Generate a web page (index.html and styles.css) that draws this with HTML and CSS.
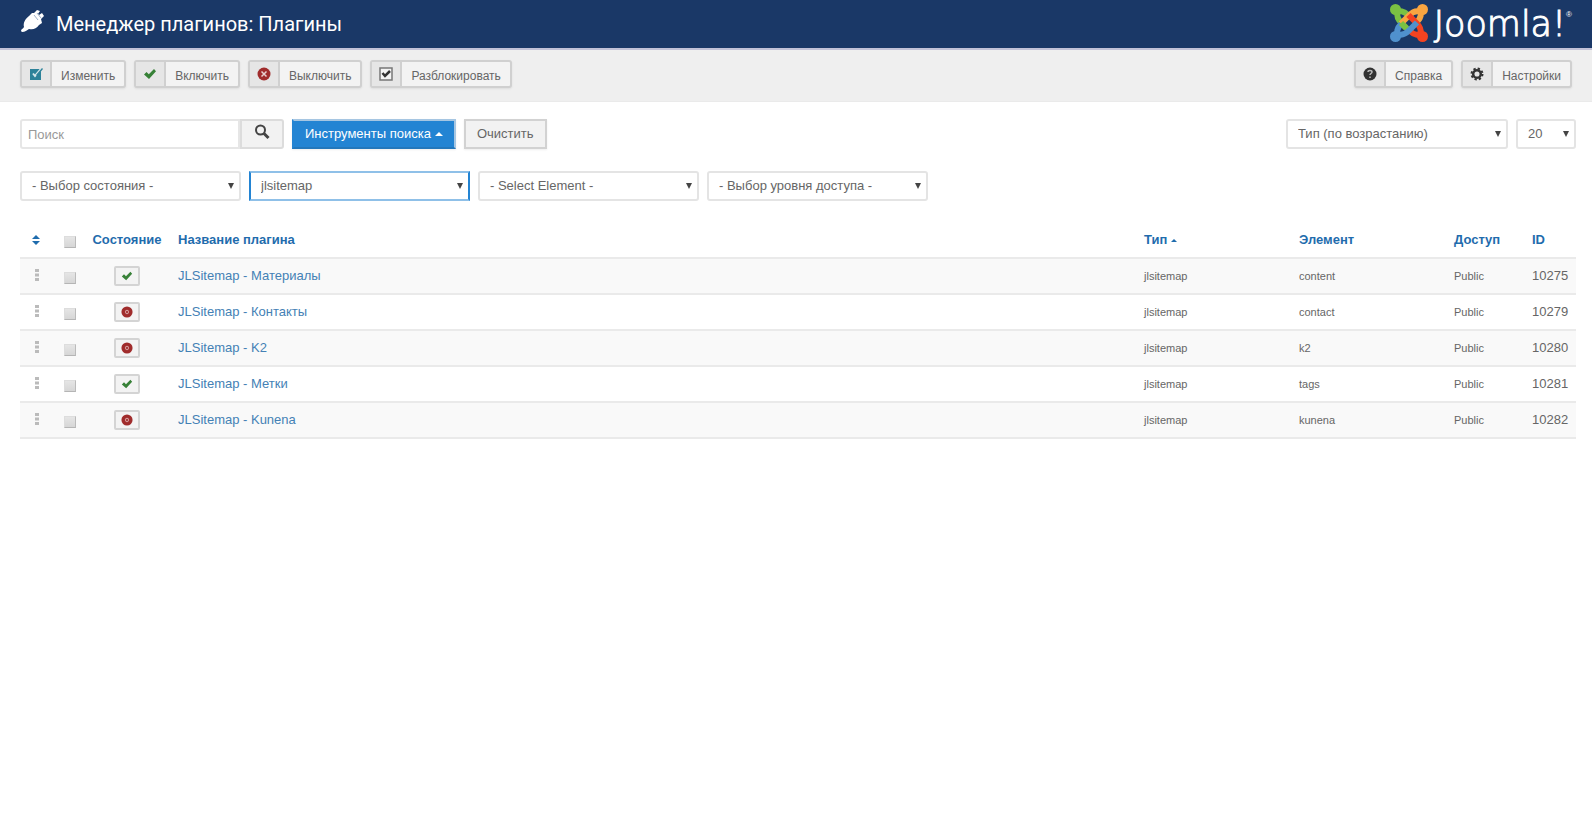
FILE: index.html
```html
<!DOCTYPE html>
<html lang="ru">
<head>
<meta charset="utf-8">
<title>Менеджер плагинов: Плагины</title>
<link rel="stylesheet" href="styles.css">
</head>
<body>
<svg class="sprite" aria-hidden="true">
  <symbol id="check" viewBox="0 0 14 14"><path d="M1 7.500 3.500 5l2.300 2.300L11 2l2 2.300L6 12z" fill="#378137"/></symbol>
  <symbol id="cancel" viewBox="0 0 14 14"><circle cx="7" cy="7" r="6.500" fill="#a02c2c"/><path d="m4.500 4.500 5 5m0-5-5 5" stroke="#e8d0d0" stroke-width="1.500"/></symbol>
  <symbol id="dot-cancel" viewBox="0 0 14 14"><circle cx="7" cy="7" r="4.500" fill="#d49a9a" stroke="#a02c2c" stroke-width="4"/><path d="m5.500 5.500 3 3m0-3-3 3" stroke="#a02c2c" stroke-width="1"/></symbol>
  <symbol id="arrow" viewBox="0 0 8 8"><path d="M1 1h6L4 7z" fill="#444"/></symbol>
  <symbol id="grip" viewBox="0 0 4 14"><path d="M0 0h4v3H0zM0 4.500h4v3H0zM0 9h4v3H0z" fill="#bbb"/></symbol>
  <symbol id="arm" viewBox="0 0 38 38"><circle cx="5.500" cy="5.500" r="5.500" fill="currentColor"/><path d="M18 11C14 7 9 6 7.500 9c-1 4 1 7 4 10l8 8" fill="none" stroke="currentColor" stroke-width="6"/></symbol>
</svg>
<header class="header">
  <svg class="plug" viewBox="0 0 24 24" aria-hidden="true"><path d="M1 22c0-2 2-2 3-4-1-4 1-8 5-11l3-3 2 0 3-3 3 1-2 3 1 1 3-2 2 3-3 3 1 4-3 2c-3 4-6 5-10 4-2 1-4 3-7 3z" fill="#fff"/><path d="m14 6 4 5m-1-7 4 5" stroke="#9fb0c8" stroke-width="1"/></svg>
  <h1 class="title">Менеджер плагинов: Плагины</h1>
  <a class="logo" href="#">
    <svg class="mark" viewBox="0 0 38 38" aria-hidden="true">
      <use href="#arm" width="38" height="38" color="#7ac143"/>
      <use href="#arm" width="38" height="38" color="#f9a541" transform="rotate(90 19 19)"/>
      <use href="#arm" width="38" height="38" color="#f44321" transform="rotate(180 19 19)"/>
      <use href="#arm" width="38" height="38" color="#5091cd" transform="rotate(270 19 19)"/>
      <path d="m11 19 5 5" stroke="#7ac143" stroke-width="6"/>
    </svg>
    <span class="wordmark">Joomla!</span><span class="reg">®</span>
  </a>
</header>
<nav class="toolbar" aria-label="Действия">
  <button class="tool"><span class="tool-icon"><svg class="icon" viewBox="0 0 14 14"><path d="M1 2h11v11H1z" fill="#2d8299"/><path d="M4 6.500 6 9l6-7" fill="none" stroke="#d5e6ea" stroke-width="2"/><path d="m7 8 6-7 1 1-6 7z" fill="#2d8299"/></svg></span><span class="tool-text">Изменить</span></button>
  <button class="tool"><span class="tool-icon"><svg class="icon"><use href="#check"/></svg></span><span class="tool-text">Включить</span></button>
  <button class="tool"><span class="tool-icon"><svg class="icon"><use href="#cancel"/></svg></span><span class="tool-text">Выключить</span></button>
  <button class="tool"><span class="tool-icon"><svg class="icon" viewBox="0 0 14 14"><path d="M1 1h12v12H1z" fill="#f4f4f4" stroke="#777" stroke-width="1.500"/><path d="m3.500 6 2.500 3 5-5" fill="none" stroke="#333" stroke-width="2.500"/></svg></span><span class="tool-text">Разблокировать</span></button>
  <span class="spacer"></span>
  <button class="tool"><span class="tool-icon"><svg class="icon" viewBox="0 0 14 14"><circle cx="7" cy="7" r="6.500" fill="#333"/><path d="M5 5c0-2 4-2 4 0 0 1.500-2 1.500-2 3m0 1.500V11" fill="none" stroke="#bbb" stroke-width="1.500"/></svg></span><span class="tool-text">Справка</span></button>
  <button class="tool"><span class="tool-icon"><svg class="icon" viewBox="0 0 14 14"><circle cx="7" cy="7" r="5.500" fill="none" stroke="#333" stroke-width="2" stroke-dasharray="2.300 2.020"/><circle cx="7" cy="7" r="3.800" fill="none" stroke="#333" stroke-width="2.500"/></svg></span><span class="tool-text">Настройки</span></button>
</nav>
<main class="main">
  <form class="row" onsubmit="return false">
    <div class="search"><input class="field" type="text" placeholder="Поиск" aria-label="Поиск"><button class="go" aria-label="Искать"><svg class="lens" viewBox="0 0 16 16"><circle cx="6.500" cy="6" r="4.500" fill="none" stroke="#444" stroke-width="2"/><path d="m9.500 9 5 5" stroke="#444" stroke-width="3"/></svg></button></div>
    <button class="btn primary">Инструменты поиска <svg class="caret" viewBox="0 0 8 4"><path d="M0 4 4 0l4 4z" fill="#fff"/></svg></button>
    <button class="btn">Очистить</button>
    <span class="spacer"></span>
    <span class="pick"><select class="select" aria-label="Сортировка"><option>Тип (по возрастанию)</option></select><svg class="arrow"><use href="#arrow"/></svg></span>
    <span class="pick short"><select class="select" aria-label="Количество"><option>20</option></select><svg class="arrow"><use href="#arrow"/></svg></span>
  </form>
  <div class="row filters">
    <span class="pick"><select class="select" aria-label="Состояние"><option>- Выбор состояния -</option></select><svg class="arrow"><use href="#arrow"/></svg></span>
    <span class="pick"><select class="select active" aria-label="Тип"><option>jlsitemap</option></select><svg class="arrow"><use href="#arrow"/></svg></span>
    <span class="pick"><select class="select" aria-label="Элемент"><option>- Select Element -</option></select><svg class="arrow"><use href="#arrow"/></svg></span>
    <span class="pick"><select class="select" aria-label="Доступ"><option>- Выбор уровня доступа -</option></select><svg class="arrow"><use href="#arrow"/></svg></span>
  </div>
  <table class="list">
    <thead>
      <tr>
        <th class="c-sort"><a href="#" aria-label="Порядок"><svg class="sort" viewBox="0 0 8 10"><path d="M0 4 4 0l4 4zM0 6h8l-4 4z" fill="#1f6cad"/></svg></a></th>
        <th class="c-check"><input class="tick" type="checkbox" aria-label="Выбрать все"></th>
        <th class="c-state"><a href="#">Состояние</a></th>
        <th><a href="#">Название плагина</a></th>
        <th class="c-type"><a href="#">Тип <svg class="caret small-caret" viewBox="0 0 8 4"><path d="M0 4 4 0l4 4z" fill="#1f6cad"/></svg></a></th>
        <th class="c-type"><a href="#">Элемент</a></th>
        <th class="c-access"><a href="#">Доступ</a></th>
        <th class="c-id"><a href="#">ID</a></th>
      </tr>
    </thead>
    <tbody>
      <tr><td class="c-sort"><svg class="grip"><use href="#grip"/></svg></td><td class="c-check"><input class="tick" type="checkbox" aria-label="Материалы"></td><td class="c-state"><button class="state" aria-label="Выключить"><svg class="mini"><use href="#check"/></svg></button></td><td><a href="#">JLSitemap - Материалы</a></td><td class="small">jlsitemap</td><td class="small">content</td><td class="small">Public</td><td>10275</td></tr>
      <tr><td class="c-sort"><svg class="grip"><use href="#grip"/></svg></td><td class="c-check"><input class="tick" type="checkbox" aria-label="Контакты"></td><td class="c-state"><button class="state" aria-label="Включить"><svg class="mini"><use href="#dot-cancel"/></svg></button></td><td><a href="#">JLSitemap - Контакты</a></td><td class="small">jlsitemap</td><td class="small">contact</td><td class="small">Public</td><td>10279</td></tr>
      <tr><td class="c-sort"><svg class="grip"><use href="#grip"/></svg></td><td class="c-check"><input class="tick" type="checkbox" aria-label="K2"></td><td class="c-state"><button class="state" aria-label="Включить"><svg class="mini"><use href="#dot-cancel"/></svg></button></td><td><a href="#">JLSitemap - K2</a></td><td class="small">jlsitemap</td><td class="small">k2</td><td class="small">Public</td><td>10280</td></tr>
      <tr><td class="c-sort"><svg class="grip"><use href="#grip"/></svg></td><td class="c-check"><input class="tick" type="checkbox" aria-label="Метки"></td><td class="c-state"><button class="state" aria-label="Выключить"><svg class="mini"><use href="#check"/></svg></button></td><td><a href="#">JLSitemap - Метки</a></td><td class="small">jlsitemap</td><td class="small">tags</td><td class="small">Public</td><td>10281</td></tr>
      <tr><td class="c-sort"><svg class="grip"><use href="#grip"/></svg></td><td class="c-check"><input class="tick" type="checkbox" aria-label="Kunena"></td><td class="c-state"><button class="state" aria-label="Включить"><svg class="mini"><use href="#dot-cancel"/></svg></button></td><td><a href="#">JLSitemap - Kunena</a></td><td class="small">jlsitemap</td><td class="small">kunena</td><td class="small">Public</td><td>10282</td></tr>
    </tbody>
  </table>
</main>
</body>
</html>
```
FILE: styles.css
```css
* { box-sizing: border-box; }
body { margin: 0; background: #fff; color: #666; font: 13px/18px "Liberation Sans", Arial, sans-serif; }
button, input, select { font: inherit; color: inherit; margin: 0; }
a { color: #4481b5; text-decoration: none; }
svg { display: block; flex: none; }
.sprite { position: absolute; width: 0; height: 0; }
.spacer { flex: 1; }

.header { display: flex; align-items: center; height: 50px; padding: 0 20px; background: #1a3867; border-bottom: 2px solid #c2c2d8; }
.plug { width: 24px; height: 24px; margin-bottom: 6px; }
.title { margin: 0 0 0 12px; color: #fff; font: 400 20px/24px Roboto, "Liberation Sans", sans-serif; }
.logo { display: flex; align-items: center; margin-left: auto; color: #fff; }
.mark { width: 38px; height: 38px; margin: 0 6px 2px 0; }
.wordmark { font: 200 35px/44px "DejaVu Sans", sans-serif; -webkit-text-stroke: 1px #fff; }
.reg { align-self: flex-start; font-size: 8px; line-height: 26px; }

.toolbar { display: flex; gap: 8px; padding: 10px 20px 13px; background: #efefef; border-bottom: 1px solid #eaeaea; }
.tool { display: flex; height: 28px; padding: 0; border: 2px solid #d0d0d0; border-radius: 3px; background: #f3f3f3; font-size: 12px; box-shadow: 0 1px 2px #ddd; }
.tool-icon { display: flex; align-items: center; justify-content: center; width: 30px; height: 24px; border-right: 2px solid #d0d0d0; background: #e6e6e6; }
.tool-text { padding: 0 9px; line-height: 28px; }
.icon { width: 14px; height: 14px; }

.main { padding: 17px 16px 0 20px; }
.row { display: flex; gap: 8px; }
.filters { gap: 8px; margin-top: 22px; }
.search { display: flex; width: 264px; }
.field { flex: 1; min-width: 0; height: 30px; padding: 0 6px; border: 2px solid #e6e6e6; border-radius: 3px 0 0 3px; background: #fff; }
.field::placeholder { color: #999; }
.go { display: flex; align-items: center; justify-content: center; width: 44px; padding: 0 0 4px; border: 2px solid #dcdcdc; border-radius: 0 3px 3px 0; background: #f2f2f2; }
.lens { width: 16px; height: 16px; }
.btn { display: flex; align-items: center; gap: 4px; height: 30px; padding: 0 11px; border: 2px solid #d2d2d2; background: #f2f2f2; box-shadow: 0 1px 2px #eee; }
.primary { border-color: #a6c6e2 #a6c6e2 #2377bb #2384d3; background: #2384d3; color: #fff; }
.caret { display: inline-block; width: 8px; height: 4px; vertical-align: middle; }
.small-caret { width: 6px; height: 3px; }
.pick { display: grid; align-items: center; width: 222px; }
.filters .pick { width: 221px; }
.row .short { width: 60px; }
.select { grid-area: 1 / 1; width: 100%; height: 30px; padding: 0 24px 0 10px; border: 2px solid #e4e4e4; border-radius: 3px; background: #fff; appearance: none; }
.active { border-color: #8fc0e8 #2384d3; border-radius: 0; }
.arrow { grid-area: 1 / 1; justify-self: end; width: 8px; height: 8px; margin-right: 6px; pointer-events: none; }

.list { width: 100%; margin-top: 21px; border-collapse: collapse; table-layout: fixed; border-bottom: 2px solid #e2e2e2; }
th, td { height: 36px; padding: 0 8px; text-align: left; border-bottom: 2px solid #eaeaea; }
th a { color: #1f6cad; }
tbody tr:nth-child(odd) { background: #f9f9f9; }
.c-sort { width: 34px; padding: 0 12px; }
.c-check { width: 30px; padding: 0; }
.c-state { width: 86px; text-align: center; }
.c-type { width: 155px; }
.c-access { width: 78px; }
.c-id { width: 52px; }
.small { font-size: 11px; }
.sort { width: 8px; height: 10px; }
.grip { width: 4px; height: 14px; margin: 0 auto; }
.tick { display: block; width: 12px; height: 12px; margin: 4px 0 0 10px; appearance: none; border: 1px solid; border-color: #ddd #bbb #b5b5b5 #ddd; background: linear-gradient(#e5e5e5, #d6d6d6); }
.state { display: flex; align-items: center; justify-content: center; width: 26px; height: 20px; margin: 0 auto; padding: 0; border: 2px solid #d4d4d4; border-radius: 2px; background: #f3f3f3; }
.mini { width: 12px; height: 12px; }
```
